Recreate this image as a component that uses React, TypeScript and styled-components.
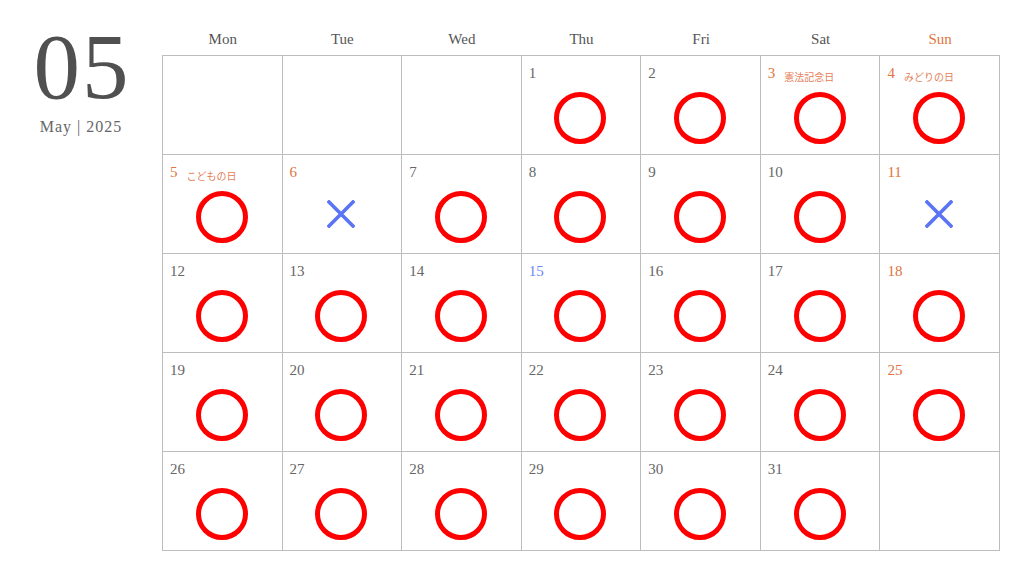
import styled, { createGlobalStyle } from 'styled-components';

type Mark = 'o' | 'x';

interface Day {
  date: number;
  mark: Mark;
  tone?: 'holiday' | 'blue';
  holiday?: string;
}

const WEEKDAYS = ['Mon', 'Tue', 'Wed', 'Thu', 'Fri', 'Sat', 'Sun'];

const HOLIDAYS: Record<number, string> = {
  3: '憲法記念日',
  4: 'みどりの日',
  5: 'こどもの日',
};

const ORANGE_DAYS = [3, 4, 5, 6, 11, 18, 25];
const CLOSED_DAYS = [6, 11];

// May 2025 starts on a Thursday
const LEADING_BLANKS = 3;
const TOTAL_DAYS = 31;

const buildCells = (): (Day | null)[] => {
  const cells: (Day | null)[] = [];
  for (let i = 0; i < LEADING_BLANKS; i++) cells.push(null);
  for (let d = 1; d <= TOTAL_DAYS; d++) {
    cells.push({
      date: d,
      mark: CLOSED_DAYS.includes(d) ? 'x' : 'o',
      tone: ORANGE_DAYS.includes(d) ? 'holiday' : d === 15 ? 'blue' : undefined,
      holiday: HOLIDAYS[d],
    });
  }
  while (cells.length % 7 !== 0) cells.push(null);
  return cells;
};

function CircleMark() {
  return (
    <svg width="54" height="54" viewBox="0 0 54 54">
      <circle cx="27" cy="27" r="23.5" fill="none" stroke="#ff0000" strokeWidth="5" />
    </svg>
  );
}

function CrossMark() {
  return (
    <CrossIcon width="28" height="28" viewBox="0 0 28 28">
      <path d="M2 2 L26 26 M26 2 L2 26" stroke="#5a74f5" strokeWidth="3.6" strokeLinecap="square" />
    </CrossIcon>
  );
}

function App() {
  const cells = buildCells();

  return (
    <>
      <GlobalStyle />
      <Page>
        <MonthColumn>
          <MonthNumber>05</MonthNumber>
          <MonthLabel>May | 2025</MonthLabel>
        </MonthColumn>
        <Calendar>
          <WeekHeader>
            {WEEKDAYS.map((w) => (
              <WeekDay key={w} $sunday={w === 'Sun'}>
                {w}
              </WeekDay>
            ))}
          </WeekHeader>
          <Grid>
            {cells.map((cell, i) => (
              <Cell key={i}>
                {cell && (
                  <>
                    <CellTop>
                      <DateNumber $tone={cell.tone}>{cell.date}</DateNumber>
                      {cell.holiday && <HolidayName>{cell.holiday}</HolidayName>}
                    </CellTop>
                    <MarkArea>{cell.mark === 'o' ? <CircleMark /> : <CrossMark />}</MarkArea>
                  </>
                )}
              </Cell>
            ))}
          </Grid>
        </Calendar>
      </Page>
    </>
  );
}

export default App;

const GlobalStyle = createGlobalStyle`
  html, body {
    margin: 0;
    padding: 0;
    background: #ffffff;
  }
  body {
    font-family: 'Liberation Serif', 'Noto Sans CJK JP', serif;
    color: #555555;
  }
`;

const Page = styled.div`
  display: flex;
  width: 1024px;
  height: 576px;
`;

const MonthColumn = styled.div`
  width: 162px;
  display: flex;
  flex-direction: column;
  align-items: center;
  padding-top: 21px;
  box-sizing: border-box;
`;

const MonthNumber = styled.div`
  font-size: 93px;
  line-height: 92px;
  color: #505050;
  letter-spacing: 2px;
  padding-left: 2px;
`;

const MonthLabel = styled.div`
  margin-top: 5px;
  font-size: 16px;
  line-height: 18px;
  color: #666666;
  letter-spacing: 1px;
`;

const Calendar = styled.div`
  width: 838px;
  display: flex;
  flex-direction: column;
`;

const WeekHeader = styled.div`
  display: grid;
  grid-template-columns: repeat(7, 1fr);
  height: 55px;
  padding-left: 1px;
  box-sizing: border-box;
`;

const WeekDay = styled.div<{ $sunday?: boolean }>`
  display: flex;
  align-items: flex-end;
  justify-content: center;
  padding-bottom: 7px;
  font-size: 15px;
  line-height: 17px;
  color: ${(p) => (p.$sunday ? '#e07440' : '#555555')};
`;

const Grid = styled.div`
  display: grid;
  grid-template-columns: repeat(7, 1fr);
  grid-auto-rows: 99px;
  border-top: 1px solid #bdbdbd;
  border-left: 1px solid #bdbdbd;
`;

const Cell = styled.div`
  display: flex;
  flex-direction: column;
  border-right: 1px solid #bdbdbd;
  border-bottom: 1px solid #bdbdbd;
  padding: 9px 8px 0 7px;
  box-sizing: border-box;
`;

const CellTop = styled.div`
  display: flex;
  align-items: flex-start;
  height: 17px;
`;

const DateNumber = styled.span<{ $tone?: 'holiday' | 'blue' }>`
  font-size: 15px;
  line-height: 17px;
  color: ${(p) => (p.$tone === 'holiday' ? '#e07440' : p.$tone === 'blue' ? '#6a86f7' : '#666666')};
`;

const HolidayName = styled.span`
  margin-left: 9px;
  margin-top: 6px;
  font-family: 'Noto Sans CJK JP', sans-serif;
  font-size: 10px;
  line-height: 12px;
  color: #e4805a;
`;

const MarkArea = styled.div`
  flex: 1;
  display: flex;
  align-items: center;
  justify-content: center;
  padding-bottom: 1px;
`;

const CrossIcon = styled.svg`
  margin-bottom: 5px;
`;
